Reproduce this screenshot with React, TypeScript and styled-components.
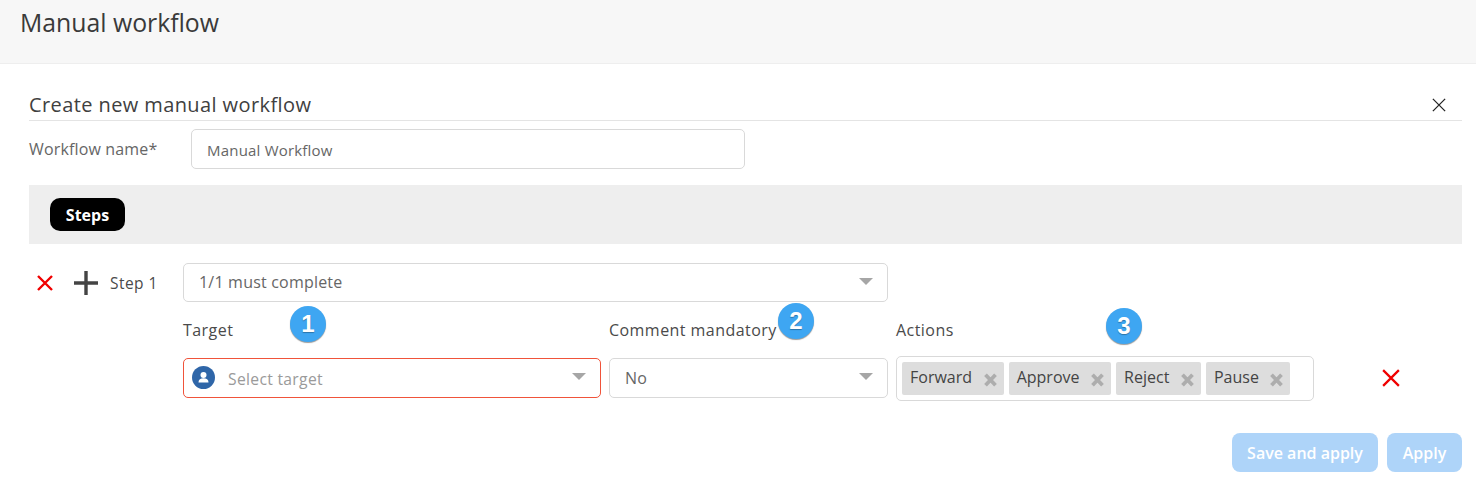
import styled, {createGlobalStyle} from 'styled-components';

const GlobalStyle = createGlobalStyle`
  html, body {
    margin: 0;
    padding: 0;
    background: #fff;
    font-family: 'Open Sans', sans-serif;
    color: #444;
  }
`;

const Page = styled.div`
  width: 1476px;
  height: 490px;
  overflow: hidden;
`;

const PageHeader = styled.header`
  height: 63px;
  box-sizing: content-box;
  background: #f7f7f7;
  border-bottom: 1px solid #eeeeee;
  padding-left: 20px;
`;

const PageTitle = styled.h1`
  margin: 0;
  font-size: 24.8px;
  line-height: 45px;
  font-weight: 500;
  color: #3a3a3a;
`;

const Panel = styled.section`
  padding: 25px 14px 0 29px;
`;

const PanelHead = styled.div`
  height: 31px;
  display: flex;
  justify-content: space-between;
  align-items: center;
  border-bottom: 1px solid #e4e4e4;
`;

const PanelTitle = styled.h2`
  margin: 0;
  font-size: 20px;
  line-height: 30px;
  font-weight: 500;
  letter-spacing: 0.4px;
  color: #404040;
`;

const CloseButton = styled.span`
  display: flex;
  margin-right: 16px;
  margin-top: 1px;
`;

const NameRow = styled.div`
  margin-top: 8px;
  display: flex;
  align-items: center;
`;

const NameLabel = styled.label`
  width: 162px;
  font-size: 16px;
  letter-spacing: 0.15px;
  margin-top: -1px;
  color: #666;
`;

const TextBox = styled.div`
  box-sizing: border-box;
  width: 554px;
  height: 40px;
  padding: 1px 15px 0;
  display: flex;
  align-items: center;
  border: 1px solid #d9d9d9;
  border-radius: 5px;
  font-size: 15px;
  letter-spacing: 0.2px;
  color: #666;
`;

const StepsBand = styled.div`
  margin-top: 16px;
  height: 59px;
  padding: 13px 21px 0;
  box-sizing: border-box;
  background: #eeeeee;
`;

const StepsPill = styled.span`
  display: inline-flex;
  align-items: center;
  justify-content: center;
  width: 75px;
  height: 33px;
  border-radius: 10px;
  background: #000;
  color: #fff;
  font-size: 16px;
  font-weight: 700;
`;

const StepRow = styled.div`
  margin-top: 19px;
  display: grid;
  grid-template-columns: 146px 418px 279px 418px 1fr;
  column-gap: 8px;
  grid-template-rows: 39px 56px auto;
`;

const StepHead = styled.div`
  display: flex;
  align-items: center;
  font-size: 15.5px;
  font-weight: 500;
  letter-spacing: 0.45px;
  white-space: nowrap;
  color: #4a4a4a;
`;

const IconSlot = styled.span`
  display: flex;
  margin-left: 8px;
`;

const AddSlot = styled.span`
  display: flex;
  margin-left: 21px;
  margin-right: 12px;
`;

const SelectBox = styled.div<{$wide?: boolean; $error?: boolean}>`
  position: relative;
  box-sizing: border-box;
  grid-column: ${props => (props.$wide ? 'span 2' : 'auto')};
  height: ${props => (props.$wide ? '39px' : '40px')};
  padding: 0 15px ${props => (props.$wide ? '2px' : '0')};
  display: flex;
  align-items: center;
  border: 1px solid ${props => (props.$error ? '#f0533a' : '#d9d9d9')};
  border-radius: 5px;
  font-size: 16px;
  letter-spacing: 0.2px;
  color: #666;
`;

const Caret = styled.span`
  position: absolute;
  right: 14px;
  top: 50%;
  margin-top: -5px;
  width: 0;
  height: 0;
  border-left: 7px solid transparent;
  border-right: 7px solid transparent;
  border-top: 7px solid #a6a6a6;
`;

const Spacer = styled.div``;

const FieldLabel = styled.div`
  position: relative;
  padding-top: 18px;
  font-size: 16px;
  line-height: 20px;
  font-weight: 500;
  letter-spacing: 0.45px;
  white-space: nowrap;
  color: #4a4a4a;
`;

const Badge = styled.span<{$left: number; $top: number}>`
  position: absolute;
  left: ${props => props.$left}px;
  top: ${props => props.$top}px;
  width: 36px;
  height: 36px;
  border-radius: 50%;
  display: flex;
  align-items: center;
  justify-content: center;
  background: #3ea6f2;
  box-shadow: 0 1px 1px rgba(0, 0, 0, 0.4);
  color: #fff;
  font-family: 'Liberation Sans', sans-serif;
  font-size: 24px;
  font-weight: 700;
  letter-spacing: 0;
  text-shadow: 0 1px 1px rgba(0, 0, 0, 0.3);
`;

const Placeholder = styled.span`
  margin-left: 13px;
  font-size: 15.7px;
  letter-spacing: 0.3px;
  margin-top: 2px;
  white-space: nowrap;
  color: #9a9a9a;
`;

const UserDot = styled.span`
  display: flex;
  margin-left: -7px;
  margin-top: -2px;
`;

const TagBox = styled.div`
  box-sizing: border-box;
  margin-top: -2px;
  height: 45px;
  padding: 5px;
  display: flex;
  gap: 5px;
  border: 1px solid #d9d9d9;
  border-radius: 5px;
`;

const Tag = styled.span`
  height: 33px;
  padding: 0 6px 0 8px;
  box-sizing: border-box;
  display: flex;
  align-items: center;
  gap: 10.6px;
  background: #dddddd;
  border-radius: 2px;
  font-size: 16px;
  color: #444;
`;

const TagLabel = styled.span`
  margin-top: -3px;
`;

const TagX = styled.span`
  display: flex;
  margin-top: 3px;
`;

const RemoveSlot = styled.span`
  display: flex;
  margin-left: 60px;
  margin-top: 11px;
  height: 18px;
`;

const Footer = styled.div`
  margin-top: 32px;
  display: flex;
  justify-content: flex-end;
  gap: 9px;
`;

const ActionButton = styled.button<{$width: number}>`
  width: ${props => props.$width}px;
  height: 39px;
  padding: 0;
  border: 0;
  border-radius: 8px;
  background: #aed4f9;
  color: #fff;
  font-family: inherit;
  font-size: 16px;
  font-weight: 600;
`;

const Cross = ({size, color, width}: {size: number; color: string; width: number}) => (
  <svg width={size} height={size} viewBox="0 0 16 16">
    <path d="M1 1L15 15M15 1L1 15" stroke={color} strokeWidth={width} fill="none" />
  </svg>
);

const TagCross = () => (
  <svg width="15" height="14" viewBox="0 0 15 14">
    <path d="M2.5 1.8L12.5 12.2M12.5 1.8L2.5 12.2" stroke="#adadad" strokeWidth="3.8" fill="none" />
  </svg>
);

const Plus = () => (
  <svg width="24" height="24" viewBox="0 0 24 24">
    <path d="M12 0V24M0 12H24" stroke="#444" strokeWidth="3.4" fill="none" />
  </svg>
);

const UserIcon = () => (
  <svg width="23" height="23" viewBox="0 0 23 23">
    <circle cx="11.5" cy="11.5" r="11.5" fill="#2f66a8" />
    <circle cx="11.5" cy="9" r="3" fill="#fff" />
    <path d="M6.5 16.5c0-3 2-4.2 5-4.2s5 1.2 5 4.2z" fill="#fff" />
  </svg>
);

const actions = ['Forward', 'Approve', 'Reject', 'Pause'];

export default function App() {
  return (
    <Page>
      <GlobalStyle />
      <PageHeader>
        <PageTitle>Manual workflow</PageTitle>
      </PageHeader>
      <Panel>
        <PanelHead>
          <PanelTitle>Create new manual workflow</PanelTitle>
          <CloseButton>
            <Cross size={14} color="#222" width={1.5} />
          </CloseButton>
        </PanelHead>
        <NameRow>
          <NameLabel>Workflow name*</NameLabel>
          <TextBox>Manual Workflow</TextBox>
        </NameRow>
        <StepsBand>
          <StepsPill>Steps</StepsPill>
        </StepsBand>
        <StepRow>
          <StepHead>
            <IconSlot>
              <Cross size={16} color="#f00000" width={2.4} />
            </IconSlot>
            <AddSlot>
              <Plus />
            </AddSlot>
            Step 1
          </StepHead>
          <SelectBox $wide>
            1/1 must complete
            <Caret />
          </SelectBox>
          <Spacer />
          <Spacer />
          <Spacer />
          <FieldLabel>
            Target
            <Badge $left={107} $top={4}>1</Badge>
          </FieldLabel>
          <FieldLabel>
            Comment mandatory
            <Badge $left={169} $top={1}>2</Badge>
          </FieldLabel>
          <FieldLabel>
            Actions
            <Badge $left={210} $top={6}>3</Badge>
          </FieldLabel>
          <Spacer />
          <Spacer />
          <SelectBox $error>
            <UserDot>
              <UserIcon />
            </UserDot>
            <Placeholder>Select target</Placeholder>
            <Caret />
          </SelectBox>
          <SelectBox>
            No
            <Caret />
          </SelectBox>
          <TagBox>
            {actions.map(action => (
              <Tag key={action}>
                <TagLabel>{action}</TagLabel>
                <TagX>
                  <TagCross />
                </TagX>
              </Tag>
            ))}
          </TagBox>
          <RemoveSlot>
            <Cross size={18} color="#f00000" width={2} />
          </RemoveSlot>
        </StepRow>
        <Footer>
          <ActionButton $width={146}>Save and apply</ActionButton>
          <ActionButton $width={75}>Apply</ActionButton>
        </Footer>
      </Panel>
    </Page>
  );
}
